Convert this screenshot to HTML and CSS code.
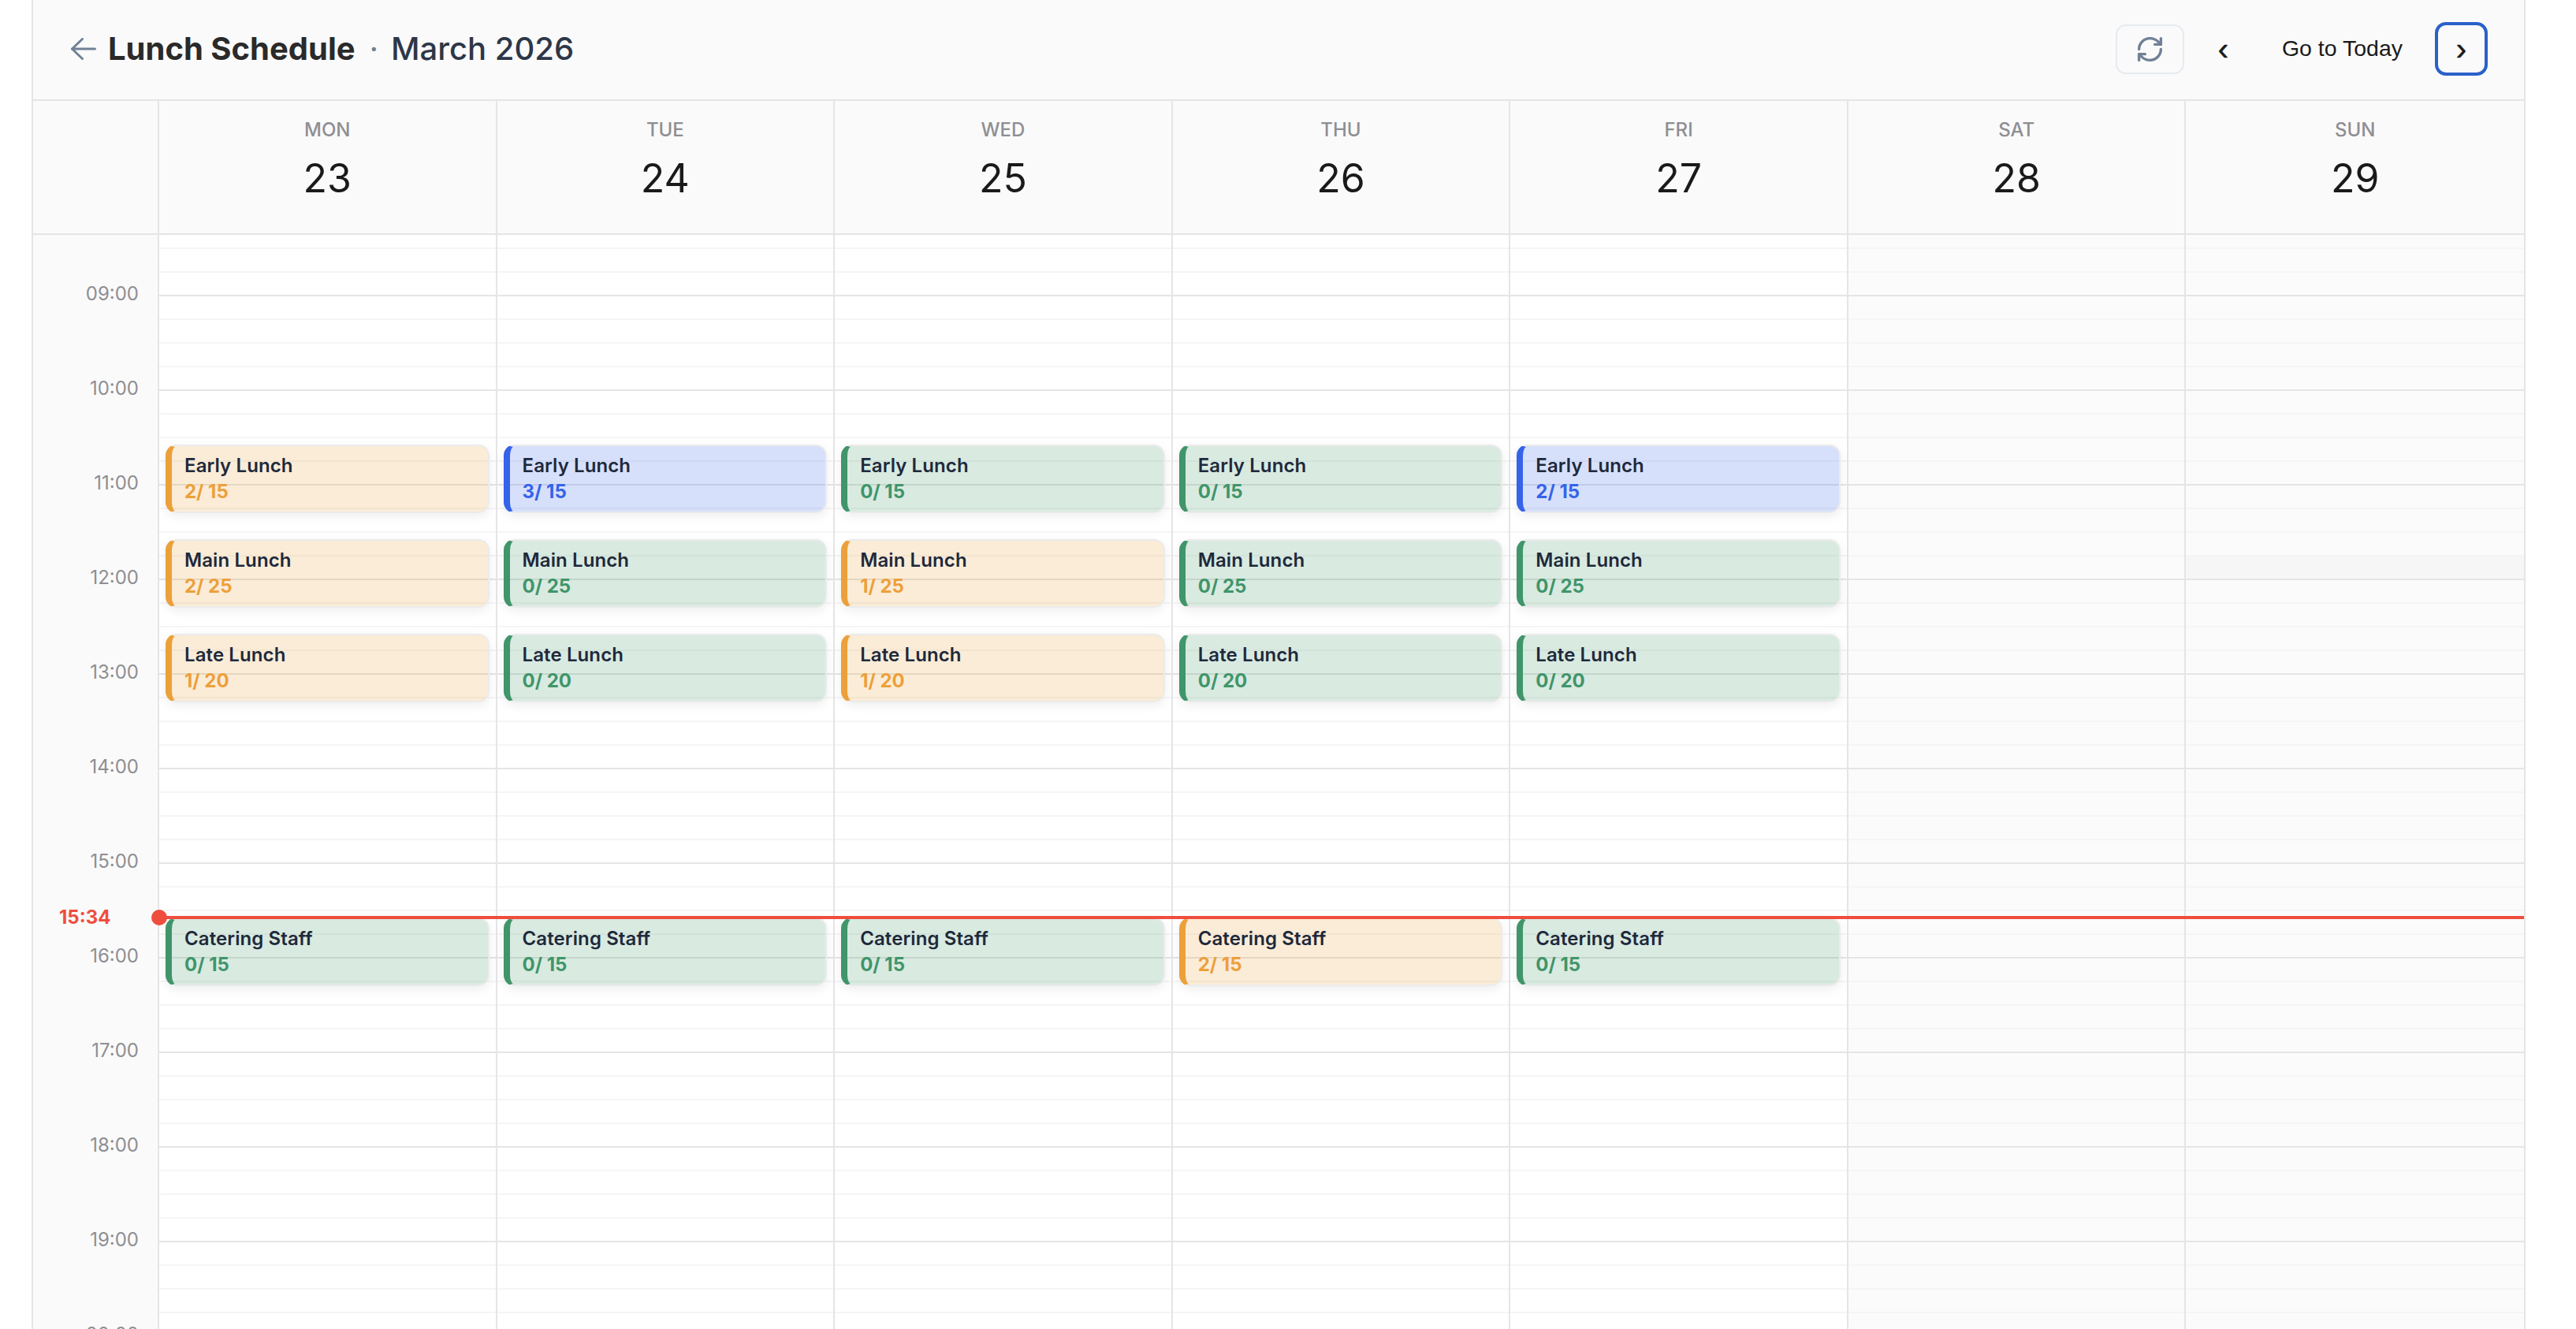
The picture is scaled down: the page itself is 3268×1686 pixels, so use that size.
FILE: index.html
```html
<!DOCTYPE html>
<html lang="en">
<head>
<meta charset="utf-8">
<title>Lunch Schedule</title>
<link rel="stylesheet" href="styles.css">
</head>
<body>
<main class="calendar">
  <header class="topbar">
    <div class="title-group">
      <button class="back-btn" aria-label="Back">
        <svg class="back-icon" viewBox="0 0 32 28" fill="none" stroke="currentColor" stroke-width="3" stroke-linecap="round" stroke-linejoin="round"><path d="M30.5 14H1.5"/><path d="M14.5 1.5 1.5 14l13 12.5"/></svg>
      </button>
      <h1 class="title">Lunch Schedule</h1>
      <span class="title-dot">·</span>
      <span class="month">March 2026</span>
    </div>
    <div class="actions">
      <button class="refresh-btn" aria-label="Refresh">
        <svg class="refresh-icon" viewBox="0 0 24 24" fill="none" stroke="currentColor" stroke-width="2.2" stroke-linecap="round" stroke-linejoin="round"><path d="M3 12a9 9 0 0 1 9-9 9.75 9.75 0 0 1 6.74 2.74L21 8"/><path d="M21 3v5h-5"/><path d="M21 12a9 9 0 0 1-9 9 9.75 9.75 0 0 1-6.74-2.74L3 16"/><path d="M8 16H3v5"/></svg>
      </button>
      <button class="nav-btn">‹</button>
      <button class="today-btn">Go to Today</button>
      <button class="nav-btn nav-focus">›</button>
    </div>
  </header>

  <div class="week-head">
    <div class="head-gutter"></div>
    <div class="head-day"><span class="dow">MON</span><span class="dom">23</span></div>
    <div class="head-day"><span class="dow">TUE</span><span class="dom">24</span></div>
    <div class="head-day"><span class="dow">WED</span><span class="dom">25</span></div>
    <div class="head-day"><span class="dow">THU</span><span class="dom">26</span></div>
    <div class="head-day"><span class="dow">FRI</span><span class="dom">27</span></div>
    <div class="head-day"><span class="dow">SAT</span><span class="dom">28</span></div>
    <div class="head-day"><span class="dow">SUN</span><span class="dom">29</span></div>
  </div>

  <div class="week-body">
    <div class="times">
      <div class="time">09:00</div><div class="time">10:00</div><div class="time">11:00</div><div class="time">12:00</div>
      <div class="time">13:00</div><div class="time">14:00</div><div class="time">15:00</div><div class="time">16:00</div>
      <div class="time">17:00</div><div class="time">18:00</div><div class="time">19:00</div><div class="time">20:00</div>
    </div>

    <div class="day">
      <article class="event early warn"><strong>Early Lunch</strong><span>2/ 15</span></article>
      <article class="event main warn"><strong>Main Lunch</strong><span>2/ 25</span></article>
      <article class="event late warn"><strong>Late Lunch</strong><span>1/ 20</span></article>
      <article class="event staff ok"><strong>Catering Staff</strong><span>0/ 15</span></article>
    </div>
    <div class="day">
      <article class="event early info"><strong>Early Lunch</strong><span>3/ 15</span></article>
      <article class="event main ok"><strong>Main Lunch</strong><span>0/ 25</span></article>
      <article class="event late ok"><strong>Late Lunch</strong><span>0/ 20</span></article>
      <article class="event staff ok"><strong>Catering Staff</strong><span>0/ 15</span></article>
    </div>
    <div class="day">
      <article class="event early ok"><strong>Early Lunch</strong><span>0/ 15</span></article>
      <article class="event main warn"><strong>Main Lunch</strong><span>1/ 25</span></article>
      <article class="event late warn"><strong>Late Lunch</strong><span>1/ 20</span></article>
      <article class="event staff ok"><strong>Catering Staff</strong><span>0/ 15</span></article>
    </div>
    <div class="day">
      <article class="event early ok"><strong>Early Lunch</strong><span>0/ 15</span></article>
      <article class="event main ok"><strong>Main Lunch</strong><span>0/ 25</span></article>
      <article class="event late ok"><strong>Late Lunch</strong><span>0/ 20</span></article>
      <article class="event staff warn"><strong>Catering Staff</strong><span>2/ 15</span></article>
    </div>
    <div class="day">
      <article class="event early info"><strong>Early Lunch</strong><span>2/ 15</span></article>
      <article class="event main ok"><strong>Main Lunch</strong><span>0/ 25</span></article>
      <article class="event late ok"><strong>Late Lunch</strong><span>0/ 20</span></article>
      <article class="event staff ok"><strong>Catering Staff</strong><span>0/ 15</span></article>
    </div>
    <div class="day weekend"></div>
    <div class="day weekend day-last"><div class="slot-hover"></div></div>

    <div class="now-line">
      <span class="now-label">15:34</span>
      <span class="now-dot"></span>
    </div>
  </div>
</main>
</body>
</html>
```

FILE: styles.css
```css
* { box-sizing: border-box; }

html, body { height: 100%; }

body {
  margin: 0;
  padding: 0 64px 0 40px;
  overflow: hidden;
  background: #fff;
  font-family: Inter, "Liberation Sans", sans-serif;
  color: #1a1a1a;
}

button {
  margin: 0;
  padding: 0;
  background: none;
  border: 0;
  color: inherit;
  font-family: "Liberation Sans", Arial, sans-serif;
}

.calendar {
  display: flex;
  flex-direction: column;
  height: 100%;
  border-left: 2px solid #e5e5e5;
  border-right: 2px solid #e5e5e5;
}

/* Top bar */
.topbar {
  flex: none;
  display: flex;
  align-items: center;
  justify-content: space-between;
  height: 128px;
  padding: 0 46px 2px 48px;
  background: #fafafa;
  border-bottom: 2px solid #e5e5e5;
}

.title-group { display: flex; align-items: center; }

.back-btn { display: flex; color: #718096; margin-right: 15px; }
.back-icon { width: 32px; height: 28px; display: block; }

.title {
  margin: 0;
  font-size: 40px;
  line-height: 56px;
  font-weight: 700;
  color: #2a2a2a;
}

.title-dot {
  margin: 0 16px 0 18px;
  font-size: 40px;
  line-height: 56px;
  color: #718096;
}

.month {
  font-size: 40px;
  line-height: 56px;
  font-weight: 500;
  color: #2d3748;
}

.actions { display: flex; align-items: center; gap: 16px; }

.refresh-btn {
  display: flex;
  align-items: center;
  justify-content: center;
  width: 87px;
  height: 63px;
  color: #718096;
  border: 2px solid #e6eaf1;
  border-radius: 13px;
}
.refresh-icon { width: 37px; height: 37px; display: block; }

.nav-btn {
  width: 67px;
  height: 68px;
  font-size: 40px;
  line-height: 1;
  -webkit-text-stroke: 0.6px currentColor;
  border: 4px solid transparent;
  border-radius: 14px;
}
.nav-focus { border-color: #2a61c9; }

.today-btn {
  width: 203px;
  height: 68px;
  padding-bottom: 2px;
  font-size: 28.5px;
  line-height: 1;
}

/* Week header */
.week-head {
  flex: none;
  display: grid;
  grid-template-columns: 160px repeat(7, 1fr);
  height: 170px;
  background: #fafafa;
  border-bottom: 2px solid #e5e5e5;
}

.head-gutter, .head-day { border-right: 2px solid #e5e5e5; }
.head-day:last-child { border-right: 0; }

.head-day {
  display: flex;
  flex-direction: column;
  align-items: center;
  padding-top: 22px;
}

.dow {
  font-size: 24px;
  line-height: 30px;
  font-weight: 500;
  color: #8e8e93;
}

.dom {
  margin-top: 16px;
  font-size: 50px;
  line-height: 60px;
  font-weight: 400;
  color: #1a1a1a;
}

/* Week body */
.week-body {
  position: relative;
  flex: 1;
  min-height: 0;
  display: grid;
  grid-template-columns: 160px repeat(7, 1fr);
  overflow: hidden;
}

.times {
  padding: 14px 24px 0 0;
  background: #fafafa;
  border-right: 2px solid #e5e5e5;
}

.time {
  display: flex;
  align-items: center;
  justify-content: flex-end;
  height: 120px;
  font-size: 24px;
  color: #8e8e93;
}

.day {
  position: relative;
  border-right: 2px solid #e5e5e5;
  background-color: #fff;
  background-image:
    linear-gradient(to top, #e5e5e5 2px, transparent 2px),
    linear-gradient(to top, #f5f5f5 2px, transparent 2px);
  background-size: 100% 120px, 100% 30px;
  background-position: 0 -42px, 0 -12px;
}
.day-last { border-right: 0; }
.weekend { background-color: #fbfbfb; }

.slot-hover {
  position: absolute;
  left: 0;
  right: 0;
  top: 408px;
  height: 28px;
  background: #f6f6f6;
}

/* Events */
.event {
  position: absolute;
  left: 8px;
  right: 8px;
  height: 87px;
  display: flex;
  flex-direction: column;
  padding: 8px 12px 0 16px;
  font-size: 24px;
  line-height: 33px;
  border: 2px solid #ebebeb;
  border-left: 8px solid var(--accent);
  border-radius: 14px;
  background: var(--tint);
  box-shadow: 0 4px 14px rgba(0, 0, 0, 0.07);
}
.event strong { font-weight: 600; letter-spacing: 0.1px; color: #1e293b; }
.event span { font-weight: 700; color: var(--accent); }

.early { top: 266px; }
.main { top: 386px; }
.late { top: 506px; }
.staff { top: 866px; }

.warn { --accent: #eca03a; --tint: rgba(237, 160, 56, 0.2); }
.ok { --accent: #40956a; --tint: rgba(63, 148, 105, 0.2); }
.info { --accent: #3563e9; --tint: rgba(53, 99, 233, 0.2); }

/* Now indicator */
.now-line {
  position: absolute;
  left: 160px;
  right: 0;
  top: 864px;
  height: 4px;
  background: #ef4d3e;
}

.now-dot {
  position: absolute;
  left: -10px;
  top: -8px;
  width: 20px;
  height: 20px;
  border-radius: 50%;
  background: #ef4d3e;
}

.now-label {
  position: absolute;
  left: -127px;
  top: -16px;
  font-size: 24px;
  line-height: 36px;
  font-weight: 700;
  color: #ef4d3e;
}
```
